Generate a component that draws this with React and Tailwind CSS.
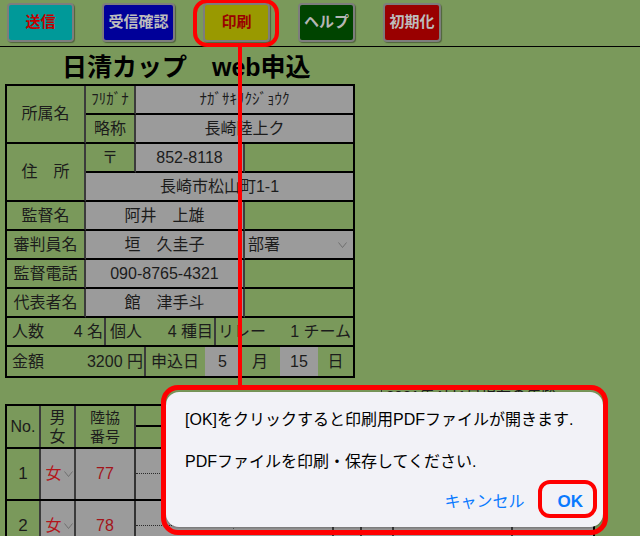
import clsx from "clsx"

const buttons = [
  { label: "送信", w: "w-[67px]", bg: "bg-[#009999]", fg: "text-[#c40000]" },
  { label: "受信確認", w: "w-[73px]", bg: "bg-[#000099]", fg: "text-[#bdbdbd]" },
  { label: "印刷", w: "w-[67px]", bg: "bg-[#999900]", fg: "text-[#990000]" },
  { label: "ヘルプ", w: "w-[57px]", bg: "bg-[#004400]", fg: "text-[#b5b5b5]" },
  { label: "初期化", w: "w-[58px]", bg: "bg-[#990000]", fg: "text-[#bdbdbd]" },
]

function Chevron({ className = "" }) {
  return (
    <svg className={className} width="9" height="6" viewBox="0 0 9 6" fill="none">
      <path d="M0.5 0.5 L4.5 5.5 L8.5 0.5" stroke="#6b6b6b" strokeWidth="0.9" />
    </svg>
  )
}

// one box of the entry sheet grid
function Cell({ children, gray, last, spread, className = "" }) {
  return (
    <div
      className={clsx(
        "flex items-center border-b-2 border-b-black",
        spread ? "justify-between" : "justify-center",
        last ? "border-r-0" : "border-r-2 border-r-[#3b3b3b]",
        gray && "bg-[#9b9b9b]",
        className
      )}
    >
      {children}
    </div>
  )
}

function Toolbar() {
  return (
    <div className="flex h-[47px] gap-[28px] border-b border-black pl-[7px] pt-[3px]">
      {buttons.map((b) => (
        <div
          key={b.label}
          className={clsx(
            "flex h-[39px] items-center justify-center rounded-[4px] border-2 border-[#7d7d7d] text-[15px] font-bold shadow-[1px_1px_1px_rgba(0,0,0,0.35)]",
            b.w,
            b.bg,
            b.fg
          )}
        >
          {b.label}
        </div>
      ))}
    </div>
  )
}

function EntryTable() {
  return (
    <div className="ml-[5px] w-[350px] border-2 border-black text-[16px]">
      <div className="grid grid-cols-[79px_50px_109px_108px] grid-rows-[repeat(8,29px)]">
        <Cell className="row-span-2">所属名</Cell>
        <Cell className="text-[15px]">ﾌﾘｶﾞﾅ</Cell>
        <Cell gray last className="col-span-2 text-[15px]">ﾅｶﾞｻｷﾘｸｼﾞｮｳｸ</Cell>
        <Cell>略称</Cell>
        <Cell gray last className="col-span-2">長崎陸上ク</Cell>

        <Cell className="row-span-2">住　所</Cell>
        <Cell>〒</Cell>
        <Cell gray>852-8118</Cell>
        <Cell last />
        <Cell gray last className="col-span-3">長崎市松山町1-1</Cell>

        <Cell>監督名</Cell>
        <Cell gray className="col-span-2">阿井　上雄</Cell>
        <Cell last />

        <Cell>審判員名</Cell>
        <Cell gray className="col-span-2">垣　久圭子</Cell>
        <Cell gray last spread className="pl-[3px] pr-[6px]">
          <span>部署</span>
          <Chevron />
        </Cell>

        <Cell>監督電話</Cell>
        <Cell gray className="col-span-2">090-8765-4321</Cell>
        <Cell last />

        <Cell>代表者名</Cell>
        <Cell gray className="col-span-2">館　津手斗</Cell>
        <Cell last />
      </div>

      <div className="flex h-[29px] border-b-2 border-black">
        <div className="flex w-[99px] items-center justify-between border-r-2 border-[#3b3b3b] pl-[5px] pr-[1px]">
          <span>人数</span>
          <span>4 名</span>
        </div>
        <div className="flex w-[110px] items-center justify-between border-r-2 border-[#3b3b3b] pl-[4px] pr-[1px]">
          <span>個人</span>
          <span>4 種目</span>
        </div>
        <div className="flex flex-1 items-center justify-between pl-[2px] pr-[2px]">
          <span>リレー</span>
          <span>1 チーム</span>
        </div>
      </div>

      <div className="flex h-[29px]">
        <div className="flex w-[139px] items-center justify-between border-r-2 border-[#3b3b3b] pl-[5px] pr-[1px]">
          <span>金額</span>
          <span>3200 円</span>
        </div>
        <div className="flex w-[59px] items-center pl-[5px]">申込日</div>
        <div className="flex w-[35px] items-center justify-center bg-[#9b9b9b]">5</div>
        <div className="flex w-[40px] items-center justify-center">月</div>
        <div className="flex w-[38px] items-center justify-center bg-[#9b9b9b]">15</div>
        <div className="flex flex-1 items-center justify-center">日</div>
      </div>
    </div>
  )
}

function AthleteRow({ no, num }) {
  return (
    <div className="flex h-[52px] border-b-2 border-black">
      <div className="flex w-[34px] items-center justify-center border-r-2 border-[#3b3b3b] text-[17px]">{no}</div>
      <div className="flex w-[35px] items-center justify-center gap-[2px] border-r-2 border-[#3b3b3b] bg-[#9b9b9b] pl-[3px] text-[16px] text-[#b3161b]">
        <span>女</span>
        <Chevron />
      </div>
      <div className="flex w-[60px] items-center justify-center border-r-2 border-[#333] bg-[#9b9b9b] text-[16px] text-[#a3141a]">
        {num}
      </div>
      <div className="flex w-[198px] flex-col border-r-2 border-[#3b3b3b] bg-[#9b9b9b]">
        <div className="flex h-1/2 border-b border-dotted border-[#2b2b2b]">
          <div className="w-[98px] border-r border-dotted border-[#555]" />
        </div>
        <div className="flex h-1/2">
          <div className="w-[98px] border-r border-dotted border-[#555]" />
        </div>
      </div>
      <div className="w-[28px] border-r-2 border-[#3b3b3b] bg-[#9b9b9b]" />
      <div className="w-[32px] border-r-2 border-[#3b3b3b] bg-[#9b9b9b]" />
      <div className="w-[119px] border-r-2 border-[#3b3b3b] bg-[#9b9b9b]" />
      <div className="flex-1 bg-[#9b9b9b]" />
    </div>
  )
}

function AthleteTable() {
  return (
    <div className="ml-[5px] w-[590px] border-x-2 border-t-2 border-black">
      <div className="flex h-[43px] border-b-2 border-black">
        <div className="flex w-[34px] items-center justify-center border-r-2 border-[#3b3b3b] text-[16px]">No.</div>
        <div className="flex w-[35px] flex-col items-center justify-center border-r-2 border-[#3b3b3b] text-[16px] leading-[19px]">
          <span>男</span>
          <span>女</span>
        </div>
        <div className="flex w-[60px] flex-col items-center justify-center border-r-2 border-[#333] text-[15px] leading-[19px]">
          <span>陸協</span>
          <span>番号</span>
        </div>
        <div className="flex flex-1 flex-col">
          <div className="h-[21px] border-b-2 border-black" />
          <div className="flex-1" />
        </div>
      </div>
      <AthleteRow no="1" num="77" />
      <AthleteRow no="2" num="78" />
    </div>
  )
}

function Dialog() {
  return (
    <div className="absolute left-[166px] top-[392px] h-[135px] w-[437px] rounded-[13px] bg-[#f2f2f7] shadow-[0_1px_3px_rgba(0,0,0,0.3)]">
      <p className="pl-[19px] pt-[16px] text-[16px] leading-[24px] text-black">
        [OK]をクリックすると印刷用PDFファイルが開きます.
      </p>
      <p className="mt-[18px] pl-[19px] text-[16px] leading-[24px] text-black">
        PDFファイルを印刷・保存してください.
      </p>
      <div className="mt-[16px] flex justify-end gap-[33px] pr-[20px] text-[17px] leading-[24px] text-[#0a7aff]">
        <span className="text-[16px]">キャンセル</span>
        <span className="font-bold">OK</span>
      </div>
    </div>
  )
}

export default function App() {
  return (
    <div className="relative h-[536px] w-[640px] overflow-hidden bg-[#7a995b] font-['Liberation_Sans','Noto_Sans_CJK_JP',sans-serif] text-[#1c1c1c]">
      <Toolbar />
      <h1 className="flex h-[37px] items-center pl-[62px] pt-[5px] text-[25px] font-bold text-black">
        日清カップ　web申込
      </h1>
      <EntryTable />
      <div className="h-[26px] pt-[8px]">
        <div className="ml-[381px] border-l border-[#333] pl-[4px] text-[15px] leading-[20px]">
          2021年4月1日現在の年齢
        </div>
      </div>
      <AthleteTable />

      <Dialog />

      {/* red annotation marks */}
      <div className="absolute left-[193px] top-[-1px] h-[48px] w-[86px] rounded-[14px] border-4 border-[#ff0000]" />
      <div className="absolute left-[238px] top-[46px] h-[340px] w-[4px] bg-[#ff0000]" />
      <div className="absolute left-[161px] top-[385px] h-[150px] w-[447px] rounded-[17px] border-[5px] border-[#ff0000]" />
      <div className="absolute left-[538px] top-[480px] h-[38px] w-[59px] rounded-[12px] border-4 border-[#ff0000]" />
    </div>
  )
}
